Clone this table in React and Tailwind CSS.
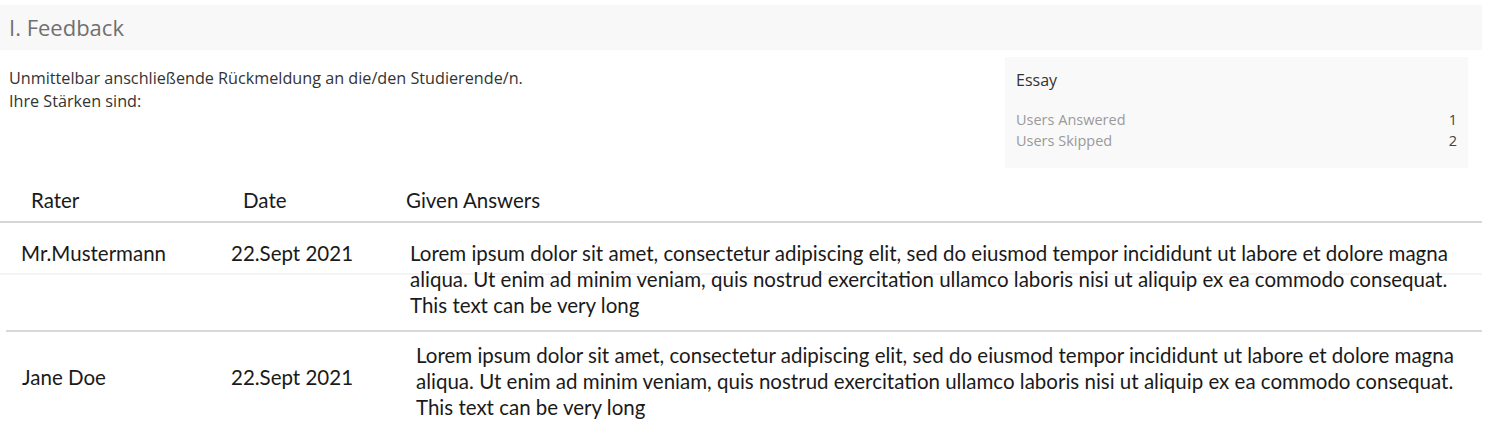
const rows = [
  {
    rater: 'Mr.Mustermann',
    date: '22.Sept 2021',
    lines: [
      'Lorem ipsum dolor sit amet, consectetur adipiscing elit, sed do eiusmod tempor incididunt ut labore et dolore magna',
      'aliqua. Ut enim ad minim veniam, quis nostrud exercitation ullamco laboris nisi ut aliquip ex ea commodo consequat.',
      'This text can be very long',
    ],
  },
  {
    rater: 'Jane Doe',
    date: '22.Sept 2021',
    lines: [
      'Lorem ipsum dolor sit amet, consectetur adipiscing elit, sed do eiusmod tempor incididunt ut labore et dolore magna',
      'aliqua. Ut enim ad minim veniam, quis nostrud exercitation ullamco laboris nisi ut aliquip ex ea commodo consequat.',
      'This text can be very long',
    ],
  },
]

const Answer = ({ lines }) => (
  <div className="leading-[26px]">
    {lines.map((l, i) => (
      <div key={i} className="whitespace-nowrap">{l}</div>
    ))}
  </div>
)

export default function App() {
  return (
    <div className="w-[1488px] h-[431px] bg-white overflow-hidden">
      <div className="font-['Open_Sans',sans-serif]">
        <div className="mt-[5px] h-[45px] w-[1482px] bg-[#f8f8f8] flex items-center pl-[9px]">
          <h1 className="text-[22px] text-[#707070]">I. Feedback</h1>
        </div>

        <div className="flex">
          <div className="pl-[9px] pt-[17px] text-[16.2px] leading-[23px] text-[#333]">
            <p>Unmittelbar anschließende Rückmeldung an die/den Studierende/n.</p>
            <p>Ihre Stärken sind:</p>
          </div>
          <div className="ml-auto mr-[20px] mt-[7px] w-[463px] h-[111px] bg-[#f9f9f9] px-[11px] pt-[12px]">
            <div className="text-[16px] text-[#333] leading-[22px]">Essay</div>
            <div className="mt-[18px] text-[14.5px] leading-[21px]">
              <div className="flex justify-between">
                <span className="text-[#9a9a9a]">Users Answered</span>
                <span className="text-[#444]">1</span>
              </div>
              <div className="flex justify-between">
                <span className="text-[#9a9a9a]">Users Skipped</span>
                <span className="text-[#444]">2</span>
              </div>
            </div>
          </div>
        </div>
      </div>

      <div className="font-['Lato',sans-serif] text-[20.5px] text-[#1a1a1a] w-[1482px]">
        <div className="flex pt-[20px] pb-[9px] leading-[24px] border-b-2 border-[#d6d6d6]">
          <div className="w-[212px] pl-[31px]">Rater</div>
          <div className="w-[163px] pl-[31px]">Date</div>
          <div className="pl-[31px]">Given Answers</div>
        </div>

        <div className="relative flex pt-[17px] pb-[12px]">
          <div className="absolute left-0 right-0 top-[50px] h-[2px] bg-[#f4f4f4]" />
          <div className="relative w-[231px] pl-[21px] leading-[26px]">{rows[0].rater}</div>
          <div className="relative w-[179px] leading-[26px]">{rows[0].date}</div>
          <div className="relative">
            <Answer lines={rows[0].lines} />
          </div>
        </div>

        <div className="ml-[6px] h-[2px] bg-[#d9d9d9]" />

        <div className="flex pt-[10px]">
          <div className="w-[231px] pl-[22px] pt-[22px] leading-[26px]">{rows[1].rater}</div>
          <div className="w-[185px] pt-[22px] leading-[26px]">{rows[1].date}</div>
          <div>
            <Answer lines={rows[1].lines} />
          </div>
        </div>
      </div>
    </div>
  )
}
